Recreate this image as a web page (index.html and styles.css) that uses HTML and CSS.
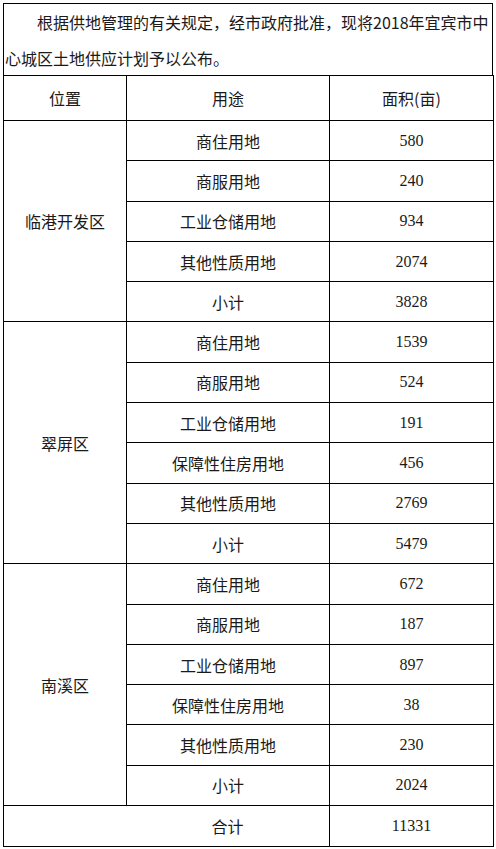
FILE: index.html
```html
<!DOCTYPE html>
<html lang="zh-CN">
<head>
<meta charset="utf-8">
<title>2018年宜宾市中心城区土地供应计划</title>
<link rel="stylesheet" href="styles.css">
</head>
<body>
<div class="doc">
  <p class="intro">根据供地管理的有关规定，经市政府批准，现将2018年宜宾市中心城区土地供应计划予以公布。</p>
  <table class="plan">
    <colgroup>
      <col class="c1"><col class="c2"><col class="c3">
    </colgroup>
    <thead>
      <tr class="head"><th>位置</th><th>用途</th><th>面积(亩)</th></tr>
    </thead>
    <tbody>
      <tr><td rowspan="5">临港开发区</td><td>商住用地</td><td class="num">580</td></tr>
      <tr><td>商服用地</td><td class="num">240</td></tr>
      <tr><td>工业仓储用地</td><td class="num">934</td></tr>
      <tr><td>其他性质用地</td><td class="num">2074</td></tr>
      <tr><td>小计</td><td class="num">3828</td></tr>

      <tr><td rowspan="6">翠屏区</td><td>商住用地</td><td class="num">1539</td></tr>
      <tr><td>商服用地</td><td class="num">524</td></tr>
      <tr><td>工业仓储用地</td><td class="num">191</td></tr>
      <tr><td>保障性住房用地</td><td class="num">456</td></tr>
      <tr><td>其他性质用地</td><td class="num">2769</td></tr>
      <tr><td>小计</td><td class="num">5479</td></tr>

      <tr><td rowspan="6">南溪区</td><td>商住用地</td><td class="num">672</td></tr>
      <tr><td>商服用地</td><td class="num">187</td></tr>
      <tr><td>工业仓储用地</td><td class="num">897</td></tr>
      <tr><td>保障性住房用地</td><td class="num">38</td></tr>
      <tr><td>其他性质用地</td><td class="num">230</td></tr>
      <tr><td>小计</td><td class="num">2024</td></tr>

      <tr class="total"><td colspan="2" class="total-label">合计</td><td class="num">11331</td></tr>
    </tbody>
  </table>
</div>
</body>
</html>
```

FILE: styles.css
```css
html, body {
  margin: 0;
  padding: 0;
  background: #ffffff;
}

body {
  font-family: "Noto Sans CJK SC", "Noto Sans", sans-serif;
  color: #1a1a1a;
}

.doc {
  margin: 3px 0 0 3px;
  width: 490px;
}

.intro {
  margin: 0;
  box-sizing: border-box;
  width: 490px;
  border: 1px solid #000;
  border-bottom: none;
  font-size: 16px;
  line-height: 36px;
  height: 72px;
  text-indent: 2em;
  padding: 0 0 0 1px;
  letter-spacing: 0;
}

.plan {
  border-collapse: collapse;
  table-layout: fixed;
  width: 490px;
  font-size: 16px;
}

.c1 { width: 123px; }
.c2 { width: 203px; }
.c3 { width: 164px; }

.plan th,
.plan td {
  border: 1px solid #000;
  text-align: center;
  vertical-align: middle;
  padding: 0;
  font-weight: normal;
  line-height: 20px;
}

.plan .head th {
  height: 44px;
}

.plan tbody tr {
  height: 40.3px;
}

.plan .num {
  font-family: "Liberation Serif", "Times New Roman", serif;
  font-size: 16px;
}

.plan .total td {
  height: 40px;
}

.plan .total-label {
  padding-left: 122px;
}
```
